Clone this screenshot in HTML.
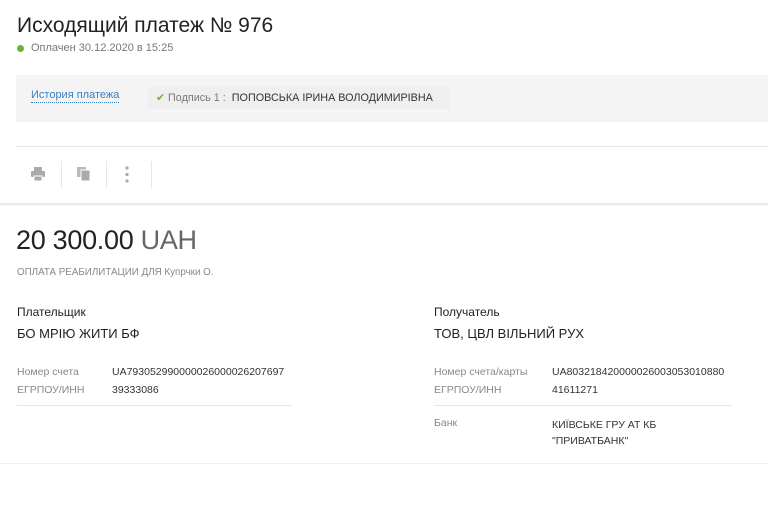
<!DOCTYPE html>
<html><head><meta charset="utf-8"><style>
*{margin:0;padding:0;box-sizing:border-box}
body{width:768px;height:516px;background:#fff;font-family:"Liberation Sans",sans-serif;color:#222;position:relative;overflow:hidden}
.a{position:absolute;white-space:nowrap}
</style></head><body>
<div class="a" style="left:17px;top:14px;font-size:21px;color:#222">Исходящий платеж № 976</div>
<div class="a" style="left:17px;top:45px;width:7px;height:7px;border-radius:50%;background:#6cb33e"></div>
<div class="a" style="left:31px;top:42px;font-size:11px;color:#777">Оплачен 30.12.2020 в 15:25</div>
<div class="a" style="left:16px;top:75px;width:752px;height:47px;background:#f4f4f4"></div>
<div class="a" style="left:148px;top:87px;width:302px;height:22px;background:#efefef"></div>
<div class="a" style="left:31px;top:89px;font-size:11px;color:#3a7fbf;border-bottom:1px dotted #3a7fbf;padding-bottom:1px">История платежа</div>
<div class="a" style="left:156px;top:91px;font-size:10.8px;color:#777"><span style="color:#6cb33e">✔</span> Подпись 1 :&nbsp; <span style="color:#333">ПОПОВСЬКА ІРИНА ВОЛОДИМИРІВНА</span></div>
<div class="a" style="left:16px;top:146px;width:752px;height:1px;background:#e6e6e6"></div>
<svg class="a" style="left:30px;top:166px" width="16" height="16" viewBox="0 0 16 16"><rect x="4" y="1" width="8" height="4" fill="#aaa"/><rect x="1" y="5" width="14" height="6" rx="1" fill="#aaa"/><rect x="4" y="10" width="8" height="5" fill="#aaa" stroke="#fff" stroke-width="1"/></svg>
<div class="a" style="left:61px;top:161px;width:1px;height:27px;background:#e6e6e6"></div>
<svg class="a" style="left:76px;top:166px" width="16" height="16" viewBox="0 0 16 16"><rect x="1" y="1" width="9" height="10" fill="#bbb"/><rect x="5" y="4" width="9" height="11" fill="#aaa" stroke="#fff" stroke-width="1"/></svg>
<div class="a" style="left:106px;top:161px;width:1px;height:27px;background:#e6e6e6"></div>
<svg class="a" style="left:124px;top:165px" width="6" height="20"><circle cx="3" cy="3" r="1.6" fill="#aaa"/><circle cx="3" cy="9.5" r="1.6" fill="#aaa"/><circle cx="3" cy="16" r="1.6" fill="#aaa"/></svg>
<div class="a" style="left:151px;top:161px;width:1px;height:27px;background:#e6e6e6"></div>
<div class="a" style="left:0;top:203px;width:768px;height:3px;background:linear-gradient(#e2e2e2,#fafafa)"></div>
<div class="a" style="left:16px;top:225px;font-size:27px;color:#222;letter-spacing:-0.3px">20 300.00 <span style="color:#666">UAH</span></div>
<div class="a" style="left:17px;top:267px;font-size:9.8px;color:#888">ОПЛАТА РЕАБИЛИТАЦИИ ДЛЯ Купрчки О.</div>
<div class="a" style="left:17px;top:305px;font-size:12px;color:#222">Плательщик</div>
<div class="a" style="left:17px;top:326px;font-size:13px;color:#222">БО МРІЮ ЖИТИ БФ</div>
<div class="a" style="left:17px;top:366px;font-size:10.5px;color:#888">Номер счета</div>
<div class="a" style="left:112px;top:366px;font-size:10.5px;color:#333">UA793052990000026000026207697</div>
<div class="a" style="left:17px;top:384px;font-size:10.5px;color:#888">ЕГРПОУ/ИНН</div>
<div class="a" style="left:112px;top:384px;font-size:10.5px;color:#333">39333086</div>
<div class="a" style="left:17px;top:405px;width:275px;height:1px;background:#e6e6e6"></div>
<div class="a" style="left:434px;top:305px;font-size:12px;color:#222">Получатель</div>
<div class="a" style="left:434px;top:326px;font-size:13px;color:#222">ТОВ, ЦВЛ ВІЛЬНИЙ РУХ</div>
<div class="a" style="left:434px;top:366px;font-size:10.5px;color:#888">Номер счета/карты</div>
<div class="a" style="left:552px;top:366px;font-size:10.5px;color:#333">UA803218420000026003053010880</div>
<div class="a" style="left:434px;top:384px;font-size:10.5px;color:#888">ЕГРПОУ/ИНН</div>
<div class="a" style="left:552px;top:384px;font-size:10.5px;color:#333">41611271</div>
<div class="a" style="left:434px;top:405px;width:298px;height:1px;background:#e6e6e6"></div>
<div class="a" style="left:434px;top:417px;font-size:10.5px;color:#888">Банк</div>
<div class="a" style="left:552px;top:417px;font-size:10.5px;color:#333;line-height:16px">КИЇВСЬКЕ ГРУ АТ КБ<br>"ПРИВАТБАНК"</div>
<div class="a" style="left:0;top:463px;width:768px;height:1px;background:#f0f0f0"></div>
</body></html>
